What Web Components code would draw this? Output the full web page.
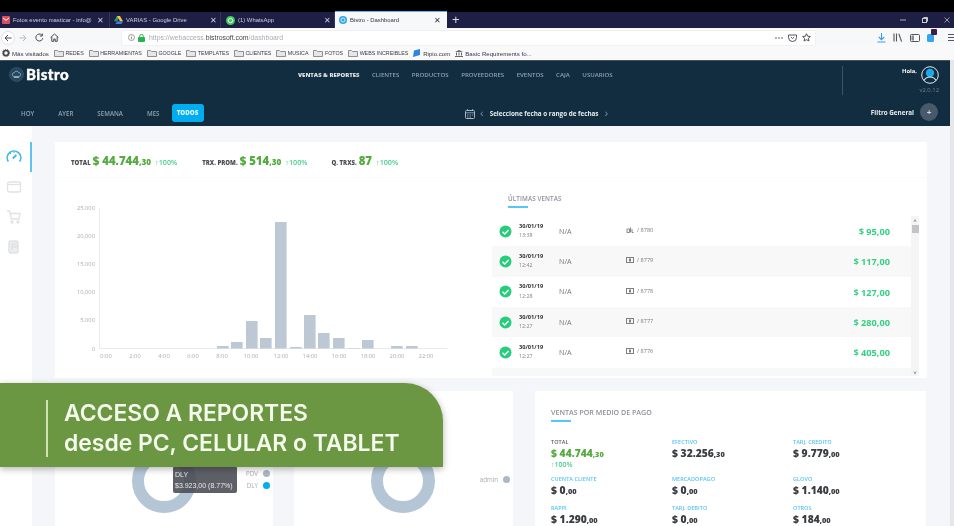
<!DOCTYPE html>
<html lang="es">
<head>
<meta charset="utf-8">
<title>Bistro - Dashboard</title>
<style>
html,body{margin:0;padding:0;height:526px;overflow:hidden;background:#f4f6fa;font-family:"Open Sans","Liberation Sans",sans-serif}
</style>
</head>
<body>
<app-shell></app-shell>
<script>
function def(name, css, html){
  customElements.define(name, class extends HTMLElement{
    connectedCallback(){
      if(this.shadowRoot) return;
      const r=this.attachShadow({mode:'open'});
      r.innerHTML='<style>'+css+'</style>'+html(this);
    }
  });
}
const a=(el,n,d='')=>el.getAttribute(n)??d;

const folder='<svg width="10" height="8" viewBox="0 0 10 8"><path d="M.5 1.500h3l1 1h5v5h-9z" fill="#e6e6e6" stroke="#77777c" stroke-width=".8"/></svg>';

def('browser-tab',`
:host{display:flex;align-items:center;box-sizing:border-box;height:16px;flex:none;padding:0 5px 0 2px;gap:3px;font:5.900px "Liberation Sans",sans-serif;color:#cfd0dc;border-right:1px solid #34355c}
:host([active]){background:#f7f8fa;color:#33363c;border-top:1px solid #55b5ee;height:17px;margin-top:-1px;border-right:0;padding:0 6px 0 4px}
span{flex:1;white-space:nowrap;overflow:hidden}
i{font-style:normal;font-size:8px;color:inherit;flex:none}
svg{flex:none}
`,el=>`<slot name="icon"></slot><span>${a(el,'label')}</span><i>✕</i>`);

def('bookmark-item',`
:host{display:inline-flex;align-items:center;gap:1.500px;font:5.300px "Liberation Sans",sans-serif;color:#3a3a40;white-space:nowrap;flex:none}
`,el=>`<slot name="icon">${folder}</slot><slot></slot>`);

def('browser-chrome',`
:host{display:block;flex:none}
.black{height:12px;background:#000}
.tabs{height:16px;background:#1e1f45;display:flex;align-items:flex-end;color:#cfd0dc}
.plus{font:13px/16px "Liberation Sans",sans-serif;margin-left:5px;color:#ddd}
.win{margin-left:auto;display:flex;gap:16px;padding-right:4px;align-items:center;height:16px}
.bar{height:18px;background:#f7f8f9;display:flex;align-items:center;box-sizing:border-box;padding:1px 0 0 1px}
.nav{display:flex;align-items:center;width:121px;flex:none;padding-left:0}
.back{width:14px;height:14px;border-radius:50%;background:#fff;border:1px solid #e2e2e4;box-sizing:border-box;display:flex;align-items:center;justify-content:center}
.url{width:693px;height:14px;background:#fff;box-shadow:0 0 1px #ccc;display:flex;align-items:center;flex:none;padding:0 4px 0 6px;box-sizing:border-box;font:6.900px "Liberation Sans",sans-serif;color:#a9abb0;gap:3px}
.url b{color:#44464b;font-weight:400}
.url .end{margin-left:auto;display:flex;align-items:center;gap:5px}
.tools{display:flex;align-items:center;margin-left:62px;gap:7px}
.marks{height:14px;background:#f9f9fa;display:flex;align-items:center;padding-left:2px;gap:5px;box-sizing:border-box}
.marks .lc{font-size:6.100px}
`,el=>`
<div class="black"></div>
<div class="tabs">
  <browser-tab label="Fotos evento masticar - info@" style="width:110px"><svg slot="icon" width="8" height="8" viewBox="0 0 8 8"><rect width="8" height="8" rx="1" fill="#d9505c"/><path d="M1 2l3 2.400L7 2" stroke="#fff" fill="none"/></svg></browser-tab>
  <browser-tab label="VARIAS - Google Drive" style="width:111px;padding:0 3px 0 4px"><svg slot="icon" width="9" height="8" viewBox="0 0 9 8"><path d="M3 0h3L3 5.300H0z" fill="#25a667"/><path d="M6 0l3 5.300H6L3 0z" fill="#ffc72e"/><path d="M1.500 8L3 5.300h6L7.500 8z" fill="#3b7de8"/></svg></browser-tab>
  <browser-tab label="(1) WhatsApp" style="width:114px;padding:0 3px 0 5px"><svg slot="icon" width="9" height="9" viewBox="0 0 9 9"><circle cx="4.500" cy="4.500" r="4.500" fill="#3ecb5a"/><circle cx="4.500" cy="4.500" r="2.200" fill="none" stroke="#fff"/></svg></browser-tab>
  <browser-tab active label="Bistro - Dashboard" style="width:112px"><svg slot="icon" width="8" height="8" viewBox="0 0 8 8"><circle cx="4" cy="4" r="4" fill="#2fa8e6"/><circle cx="4" cy="4" r="2" fill="none" stroke="#cdeaf8"/></svg></browser-tab>
  <span class="plus">+</span>
  <span class="win">
    <svg width="6" height="6" viewBox="0 0 6 6"><path d="M0 3h6" stroke="#aaa"/></svg>
    <svg width="6" height="6" viewBox="0 0 6 6" fill="none" stroke="#ccc"><rect x=".5" y="1.500" width="4" height="4"/><path d="M1.500 .5h4v4"/></svg>
    <svg width="6" height="6" viewBox="0 0 6 6" stroke="#999"><path d="M.5 .5l5 5M5.500 .5l-5 5"/></svg>
  </span>
</div>
<div class="bar">
  <div class="nav">
    <span class="back"><svg width="8" height="8" viewBox="0 0 8 8" fill="none" stroke="#4a4a50"><path d="M7.500 4H1M4 1L1 4l3 3"/></svg></span>
    <svg style="margin-left:4px" width="8" height="8" viewBox="0 0 8 8" fill="none" stroke="#bbb"><path d="M.5 4H7M4 1l3 3-3 3"/></svg>
    <svg style="margin-left:8px" width="9" height="9" viewBox="0 0 9 9" fill="none" stroke="#4a4a50"><path d="M7.800 5.200A3.500 3.500 0 1 1 6.800 2"/><path d="M7.300 .5v2.500H4.900" /></svg>
    <svg style="margin-left:6px" width="9" height="9" viewBox="0 0 9 9" fill="none" stroke="#4a4a50"><path d="M.6 4.600L4.500 1l3.900 3.600M1.800 4v4.300h2V6h1.400v2.300h2V4"/></svg>
  </div>
  <div class="url">
    <svg width="7" height="7" viewBox="0 0 7 7"><circle cx="3.500" cy="3.500" r="3" fill="none" stroke="#777" stroke-width=".7"/><path d="M3.500 3v2.200M3.500 1.700v.7" stroke="#777" stroke-width=".8"/></svg>
    <svg width="7" height="8" viewBox="0 0 7 8"><rect y="3" width="7" height="5" rx="1" fill="#2bb24c"/><path d="M1.700 3.500V2.200a1.800 1.800 0 0 1 3.600 0v1.300" fill="none" stroke="#2bb24c"/></svg>
    <span style="margin-left:1px">https://webaccess.<b>bistrosoft.com</b>/dashboard</span>
    <span class="end">
      <svg width="8" height="2" viewBox="0 0 8 2" fill="#55565c"><circle cx="1" cy="1" r=".8"/><circle cx="4" cy="1" r=".8"/><circle cx="7" cy="1" r=".8"/></svg>
      <svg width="9" height="8" viewBox="0 0 9 8" fill="none" stroke="#55565c"><path d="M.5 1h8v2.500a4 4 0 0 1-8 0zM2.800 3L4.500 4.500 6.200 3"/></svg>
      <svg width="9" height="9" viewBox="0 0 10 10" fill="none" stroke="#404046"><path d="M5 .8l1.300 2.800 3 .3-2.200 2 .6 3L5 7.400 2.300 8.900l.6-3L.7 3.900l3-.3z"/></svg>
    </span>
  </div>
  <div class="tools">
    <svg width="9" height="10" viewBox="0 0 9 10" fill="none" stroke="#3d9be9" stroke-width="1.100"><path d="M4.500 0v6.500M1.800 4l2.700 2.700L7.200 4M.5 9h8"/></svg>
    <svg width="10" height="9" viewBox="0 0 10 9" fill="none" stroke="#55565c" stroke-width="1.100"><path d="M1 .5v8M3.500 .5v8M5.800 .8l2.800 7.800"/></svg>
    <svg width="10" height="8" viewBox="0 0 10 8" fill="none" stroke="#55565c"><rect x=".5" y=".5" width="9" height="7" rx="1"/><rect x="1.500" y="1.500" width="2.500" height="5" fill="#8a8b90" stroke="none"/></svg>
    <span style="position:relative;display:inline-flex"><svg width="9" height="9" viewBox="0 0 9 9"><rect y="1" width="7" height="8" rx="1.500" fill="#35a5ee"/></svg><span style="position:absolute;left:4px;top:-4px;width:6px;height:6px;background:#3b1f4a;border-radius:1px"></span></span>
    <svg style="margin-left:5px" width="6" height="7" viewBox="0 0 6 7" stroke="#55565c"><path d="M0 .5h6M0 3.500h6M0 6.500h6"/></svg>
  </div>
</div>
<div class="marks">
  <bookmark-item class="lc" style="gap:2px;margin-right:0"><svg slot="icon" width="8" height="8" viewBox="0 0 8 8"><circle cx="4" cy="4" r="2.500" fill="none" stroke="#444" stroke-width="1.500"/><circle cx="4" cy="4" r="3.700" fill="none" stroke="#444" stroke-width="1" stroke-dasharray="1 1"/></svg>Más visitados</bookmark-item>
  <bookmark-item>REDES</bookmark-item>
  <bookmark-item>HERRAMIENTAS</bookmark-item>
  <bookmark-item>GOOGLE</bookmark-item>
  <bookmark-item>TEMPLATES</bookmark-item>
  <bookmark-item>CLIENTES</bookmark-item>
  <bookmark-item>MUSICA</bookmark-item>
  <bookmark-item>FOTOS</bookmark-item>
  <bookmark-item>WEBS INCREIBLES</bookmark-item>
  <bookmark-item class="lc" style="gap:3px"><svg slot="icon" width="7" height="8" viewBox="0 0 7 8"><path d="M1 1.500L7 0v6L0 8z" fill="#2e86e0"/></svg>Ripio.com</bookmark-item>
  <bookmark-item class="lc" style="gap:2px"><svg slot="icon" width="8" height="7" viewBox="0 0 8 7" fill="#666"><path d="M0 6h8v1H0zM1 2.500h1v3H1zM3.500 2.500h1v3h-1zM6 2.500h1v3H6zM4 0l4 2H0z"/></svg>Basic Requirements fo...</bookmark-item>
</div>`);

def('app-header',`
:host{display:block;height:66px;background:#122c40;color:#fff;flex:none;font-family:"Open Sans","Liberation Sans",sans-serif;box-sizing:border-box;border-top:1px solid #44525d}
.top{height:38px;display:flex;position:relative;box-sizing:border-box;align-items:flex-start}
.logo{display:flex;align-items:center;margin:5px 0 0 9px;gap:2px;width:289px;flex:none;font:900 15px/16px Lato,sans-serif;letter-spacing:.5px;-webkit-text-stroke:.35px #fff}
nav{display:flex;gap:12.500px;font:600 6.100px/12px "Open Sans",sans-serif;color:#8fa2b0;margin-top:8px;white-space:nowrap}
nav b{color:#dfe6ea;font-weight:800;font-size:5.950px}
.rule{position:absolute;left:842px;top:5px;width:1px;height:29px;background:#3b5364}
.user{position:absolute;right:11px;top:5px;width:60px;height:30px;font:700 5.800px "Open Sans",sans-serif;text-align:right}
.hola{position:absolute;right:22px;top:1px}
.ver{position:absolute;right:0;top:20px;color:#6d8494;font-weight:400;font-size:5.900px}
.ava{position:absolute;right:0;top:0;width:18px;height:18px}
.row{height:27px;display:flex;align-items:flex-start;position:relative}
.per{display:flex;align-items:center;height:18px;margin:5px 0 0 21px;font:600 6.200px "Open Sans",sans-serif;color:#8fa2b0}
.per span{white-space:nowrap}
.on{background:#00adee;color:#dff5ff;font-weight:800;height:18px;line-height:18px;width:32px;text-align:center;border-radius:3px}
.date{position:absolute;left:465px;top:8px;display:flex;align-items:center;font:700 6.300px "Open Sans",sans-serif;color:#e8edf0;height:13px;white-space:nowrap}
.date i{font:normal 400 11px/13px "Liberation Sans",sans-serif;color:#7f93a1}
.filter{position:absolute;right:12px;top:4px;display:flex;align-items:center;gap:6px;font:700 6.300px "Open Sans",sans-serif;color:#e8edf0}
.plus{width:18px;height:18px;border-radius:50%;background:#47596a;display:flex;align-items:center;justify-content:center;font:700 8px "Liberation Sans";color:#cfd6db}
`,el=>`
<div class="top">
  <div class="logo"><svg width="15" height="15" viewBox="0 0 15 15" fill="none"><circle cx="7.500" cy="7.500" r="7" fill="#23475e" stroke="#3f6074" stroke-width=".6"/><path d="M4.500 9.500c-2-1.500-1-4 .8-3.800C6 3.800 9 3.800 9.700 5.700c1.800-.2 2.800 2.300.8 3.800zM4.800 10.500h5.400" stroke="#9fb2bf" stroke-width=".9"/></svg><span>Bistro</span></div>
  <nav><b>VENTAS &amp; REPORTES</b><span>CLIENTES</span><span>PRODUCTOS</span><span>PROVEEDORES</span><span>EVENTOS</span><span>CAJA</span><span>USUARIOS</span></nav>
  <div class="rule"></div>
  <div class="user">
    <span class="hola">Hola,</span>
    <svg class="ava" viewBox="0 0 18 18" fill="none"><circle cx="9" cy="9" r="8.300" stroke="#dfe8ee" stroke-width="1"/><circle cx="9" cy="7" r="4.200" fill="#1ba8e6"/><path d="M3 14.500c1.500-3 3.500-3.500 6-3.500s4.500.5 6 3.500" stroke="#dfe8ee" stroke-width="1.200"/></svg>
    <span class="ver">v2.0.12</span>
  </div>
</div>
<div class="row">
  <div class="per">
    <span>HOY</span><span style="margin-left:24px">AYER</span><span style="margin-left:24px">SEMANA</span><span style="margin-left:24px">MES</span><span class="on" style="margin-left:12px">TODOS</span>
  </div>
  <div class="date">
    <svg width="10" height="10" viewBox="0 0 10 10" fill="none" stroke="#aab8c2"><rect x=".5" y="1.500" width="9" height="8" rx="1"/><path d="M.5 3.800h9M2.500 0v2M7.500 0v2M2 6h1.500M4.500 6H6M7 6h1M2 8h1.500M4.500 8H6" stroke-width=".8"/></svg>
    <i style="margin:0 6px 0 5px">‹</i><span>Seleccione fecha o rango de fechas</span><i style="margin-left:6px">›</i>
  </div>
  <div class="filter"><span>Filtro General</span><span class="plus">+</span></div>
</div>`);

def('side-nav',`
:host{display:flex;flex-direction:column;width:32px;background:#fff;flex:none;padding-top:16px;box-sizing:border-box}
div{height:30px;display:flex;align-items:center;padding-left:6px;box-sizing:border-box;width:32px;padding-bottom:1px}
.on{border-right:2px solid #5ec5f2}
`,el=>`
<div class="on"><svg width="16" height="13" viewBox="0 0 16 13" fill="none" stroke="#3db6ea" stroke-width="1.600"><path d="M2.300 11.500A6.800 6.800 0 1 1 13.700 11.500"/><path d="M6.800 8.500l3.500-3.500" stroke-width="1.800"/><path d="M4 3l1 1M8 1.500V3" stroke-width="1"/></svg></div>
<div><svg width="16" height="12" viewBox="0 0 16 12" fill="none" stroke="#e0e3e6" stroke-width="1.300"><rect x="1.500" y="1" width="13" height="10" rx="2"/><path d="M1.500 3.500h13"/></svg></div>
<div><svg width="15" height="14" viewBox="0 0 15 14" fill="none" stroke="#dfe2e5" stroke-width="1.300"><path d="M1 1h2.500l2 8h7.500l1-5.500H4.200"/><circle cx="6" cy="12" r="1"/><circle cx="12" cy="12" r="1"/></svg></div>
<div><svg width="15" height="14" viewBox="0 0 15 14" fill="none" stroke="#dfe2e5" stroke-width="1.500"><rect x="3" y="1" width="9" height="12" rx="2" fill="#eceef0"/><path d="M6 4h4v3H6zM6 7v3"/></svg></div>`);

def('kpi-stat',`
:host{display:inline-flex;align-items:baseline;font:800 6px "Open Sans",sans-serif;color:#4a4d52;white-space:nowrap}
.v{font:800 11.400px "Open Sans",sans-serif;color:#54ab3f;margin:0 4px 0 2px}
.p{font:600 7.200px "Open Sans",sans-serif;color:#47cf8d}
`,el=>`<span>${a(el,'label')}</span><span class="v"><slot></slot></span><span class="p">↑100%</span>`);

def('sales-chart',`
:host{display:block;width:437px;height:200px;flex:none}
svg{display:block}
text{font:5.800px "Open Sans",sans-serif;fill:#a9adb3}
`,el=>{
 const bars=[[217,346],[231,342],[246,321],[260,338],[275,222],[290,347],[304,315],[318,333],[333,338],[348,348],[362,340],[391,346],[406,346]];
 const yt=[['25,000',208],['20,000',236],['15,000',264],['10,000',292],['5,000',320],['0',348.500]];
 const xt=[['0:00',106],['2:00',135],['4:00',164],['6:00',193],['8:00',222],['10:00',251],['12:00',281],['14:00',310],['16:00',339],['18:00',368],['20:00',397],['22:00',426]];
 return `<svg width="437" height="200" viewBox="55 178 437 200">
 <path d="M99.500 208V348.500H447.500" fill="none" stroke="#e6eaef"/>
 ${bars.map(([x,y])=>`<rect x="${x}" y="${y}" width="11.600" height="${348.500-y}" fill="#bcc8d4"/>`).join('')}
 ${yt.map(([t,y])=>`<text x="95" y="${y+2}" text-anchor="end">${t}</text>`).join('')}
 ${xt.map(([t,x])=>`<text x="${x}" y="357.500" text-anchor="middle">${t}</text>`).join('')}
 </svg>`;});

def('sale-row',`
:host{display:flex;align-items:center;height:30.330px;box-sizing:border-box;position:relative;font-family:"Open Sans","Liberation Sans",sans-serif;flex:none}
:host(:nth-child(even)){background:#f8f8f8}
.c{margin-left:7px;flex:none;width:13px;height:13px}
.d{margin-left:7px;width:40px;flex:none;font:700 5.700px/9.500px "Open Sans",sans-serif;color:#333}
.d small{display:block;font:400 5.300px/9.500px "Open Sans",sans-serif;color:#808389}
.n{width:67px;flex:none;font:400 7.200px "Open Sans",sans-serif;color:#74777d;margin-top:-1px}
.m{display:flex;align-items:center;gap:3px;font:400 5.600px "Open Sans",sans-serif;color:#777a80;flex:none;margin-top:-2px}
.a{position:absolute;right:21px;font:700 9.200px "Open Sans",sans-serif;color:#35d083;top:50%;transform:translateY(-44%)}
`,el=>el.hasAttribute('blank')?'':`
<svg class="c" viewBox="0 0 13 13"><circle cx="6.500" cy="6.500" r="6" fill="#27cd7b"/><path d="M3.500 6.700l2.200 2.200 3.900-4" fill="none" stroke="#fff" stroke-width="1.400"/></svg>
<div class="d">${a(el,'date')}<small>${a(el,'time')}</small></div>
<div class="n">N/A</div>
<div class="m">${a(el,'kind')==='bag'?'<svg width="8" height="6" viewBox="0 0 8 6" fill="none" stroke="#888"><path d="M1 2v3.500h2.500V2zM4.500 .5v5M6 2v3.500h1.500"/></svg>':'<svg width="8" height="6" viewBox="0 0 8 6"><rect x=".5" y=".5" width="7" height="5" fill="none" stroke="#808080"/><rect x="3" y="1.500" width="2" height="3" fill="#808080"/></svg>'}<span>/ ${a(el,'id')}</span></div>
<div class="a">${a(el,'amount')}</div>`);

def('sales-list',`
:host{display:block;width:427px;flex:none;box-sizing:border-box;position:relative}
h3{margin:0;height:38px;padding:16px 0 0 16px;box-sizing:border-box;font:600 6.300px "Open Sans",sans-serif;color:#8e909b;letter-spacing:.1px}
h3::after{content:"";display:block;width:20px;height:2px;background:#55c8f2;margin-top:3px}
.box{display:flex;height:160px;overflow:hidden}
.rows{display:flex;flex-direction:column;width:419px;flex:none}
.sb{width:8px;background:#f4f4f4;position:relative;flex:none}
.sb i{position:absolute;left:0;width:8px;text-align:center;font:normal 6px/6px "Liberation Sans";color:#555}
.th{position:absolute;left:.5px;top:9px;width:7px;height:8px;background:#c2c3c7}
`,el=>`
<h3>ÚLTIMAS VENTAS</h3>
<div class="box"><div class="rows"><slot></slot></div><div class="sb"><i style="top:2px">˄</i><div class="th"></div><i style="bottom:0">˅</i></div></div>`);

def('donut-card',`
:host{display:flex;position:relative;background:#fff;box-sizing:border-box;height:135px;padding:58px 3px 13px 77px;align-items:flex-start}
svg.d{width:64px;height:64px;flex:none}
.l{margin-left:auto;margin-top:20px;display:flex;flex-direction:column;gap:3.500px;font:400 6.200px "Open Sans",sans-serif;color:#a7abb2;align-items:flex-end}
.l.one{margin-top:26px}
.l div{display:flex;align-items:center;gap:5px;height:8.500px}
.l i{width:7px;height:7px;border-radius:50%;display:block}
`,el=>{
 const items=a(el,'items').split(',').map(s=>s.split(':'));
 return `<svg class="d" viewBox="0 0 64 64"><circle cx="32" cy="32" r="26" fill="none" stroke="#b4c6d6" stroke-width="12"/></svg>
 <div class="l ${items.length===1?'one':''}">${items.map(([t,c])=>`<div>${t}<i style="background:${c}"></i></div>`).join('')}</div><slot></slot>`;});

def('chart-tip',`
:host{position:absolute;left:118px;top:75px;width:64px;height:27px;background:rgba(72,74,82,.88);border-radius:2px;color:#e8e9ec;font:400 7px/11px "Liberation Sans",sans-serif;box-sizing:border-box;padding:3px 2px;white-space:nowrap}
`,el=>`<slot></slot>`);

def('pay-stat',`
:host{display:block;font-family:"Open Sans","Liberation Sans",sans-serif}
.t{font:600 5.500px/8px "Open Sans",sans-serif;color:#56c2f3;letter-spacing:.05px;white-space:nowrap}
:host([total]) .t{color:#5a5d62}
.v{font:800 10.300px/13px "Open Sans",sans-serif;color:#3a3d42;margin-top:.500px;white-space:nowrap}
:host([total]) .v{color:#56ab40}
.p{font:600 7px/8px "Open Sans",sans-serif;color:#47cf8d}
`,el=>`<div class="t">${a(el,'label')}</div><div class="v"><slot></slot></div>${el.hasAttribute('total')?'<div class="p">↑100%</div>':''}`);

def('pay-card',`
:host{display:block;background:#fff;height:135px;box-sizing:border-box;padding:17px 0 0 16px}
h3{margin:0;font:600 7.100px/9px "Open Sans",sans-serif;color:#8e909b}
h3::after{content:"";display:block;width:20px;height:2px;background:#55c8f2;margin-top:3px}
.g{display:grid;grid-template-columns:121px 121px 121px;grid-template-rows:37px 29px 24px;margin-top:16px}
`,el=>`<h3>VENTAS POR MEDIO DE PAGO</h3><div class="g"><slot></slot></div>`);

def('promo-banner',`
:host{position:absolute;left:0;top:383px;width:443px;height:83.500px;background:#6b9642;border-top-right-radius:38px;box-shadow:0 2px 7px rgba(0,0,0,.3);box-sizing:border-box;display:flex;align-items:center;padding:7px 0 0 46px;color:#f4faec;z-index:5}
.r{width:2px;height:57px;background:#cfe3b0;margin-right:16px;flex:none}
.t{font:600 22.900px/30.500px Inter,"Open Sans",sans-serif;white-space:nowrap}
`,el=>`<div class="r"></div><div class="t"><slot></slot></div>`);

def('app-shell',`
:host{display:flex;flex-direction:column;width:954px;height:526px;overflow:hidden;position:relative;background:#f4f6fa;filter:blur(.4px)}
.page{display:flex;flex:1;min-height:0}
.app{width:950px;display:flex;flex-direction:column;flex:none;min-height:0}
.sb{flex:1;background:#e6e7ea}
.body{display:flex;flex:1;min-height:0}
main{flex:1;padding:16px 23px 0;display:flex;flex-direction:column;gap:13px;min-width:0;overflow:hidden}
.card{background:#fff;height:236px;flex:none;display:flex;flex-direction:column}
.kpis{height:36px;border-bottom:1px solid #fafbfc;display:flex;align-items:center;padding:1px 0 0 16px;box-sizing:border-box;flex:none}
.kpis kpi-stat:nth-child(2){margin-left:25px}
.kpis kpi-stat:nth-child(3){margin-left:24px}
.split{display:flex;flex:1;min-height:0}
.bottom{display:grid;grid-template-columns:218px 219px 392px;column-gap:21px;flex:none}
.bottom>:last-child{margin-left:1px}
small{font-size:.72em}
`,el=>`
<browser-chrome></browser-chrome>
<div class="page">
 <div class="app">
  <app-header></app-header>
  <div class="body">
   <side-nav></side-nav>
   <main>
    <section class="card">
     <div class="kpis">
      <kpi-stat label="TOTAL">$ 44.744<small>,30</small></kpi-stat>
      <kpi-stat label="TRX. PROM.">$ 514<small>,30</small></kpi-stat>
      <kpi-stat label="Q. TRXS.">87</kpi-stat>
     </div>
     <div class="split">
      <sales-chart></sales-chart>
      <sales-list>
       <sale-row date="30/01/19" time="13:38" kind="bag" id="8780" amount="$ 95,00"></sale-row>
       <sale-row date="30/01/19" time="12:42" id="8779" amount="$ 117,00"></sale-row>
       <sale-row date="30/01/19" time="12:28" id="8778" amount="$ 127,00"></sale-row>
       <sale-row date="30/01/19" time="12:27" id="8777" amount="$ 280,00"></sale-row>
       <sale-row date="30/01/19" time="12:27" id="8776" amount="$ 405,00"></sale-row>
       <sale-row blank></sale-row>
      </sales-list>
     </div>
    </section>
    <section class="bottom">
     <donut-card items="PDV:#a9b9c9,DLY:#00aeef"><chart-tip>DLY<br>$3.923,00 (8.77%)</chart-tip></donut-card>
     <donut-card items="admin:#a9b9c9"></donut-card>
     <pay-card>
      <pay-stat total label="TOTAL">$ 44.744<small>,30</small></pay-stat>
      <pay-stat label="EFECTIVO">$ 32.256<small>,30</small></pay-stat>
      <pay-stat label="TARJ. CREDITO">$ 9.779<small>,00</small></pay-stat>
      <pay-stat label="CUENTA CLIENTE">$ 0<small>,00</small></pay-stat>
      <pay-stat label="MERCADOPAGO">$ 0<small>,00</small></pay-stat>
      <pay-stat label="GLOVO">$ 1.140<small>,00</small></pay-stat>
      <pay-stat label="RAPPI">$ 1.290<small>,00</small></pay-stat>
      <pay-stat label="TARJ. DEBITO">$ 0<small>,00</small></pay-stat>
      <pay-stat label="OTROS">$ 184<small>,00</small></pay-stat>
     </pay-card>
    </section>
   </main>
  </div>
 </div>
 <div class="sb"></div>
</div>
<promo-banner>ACCESO A REPORTES<br>desde PC, CELULAR o TABLET</promo-banner>`);
</script>
</body>
</html>
